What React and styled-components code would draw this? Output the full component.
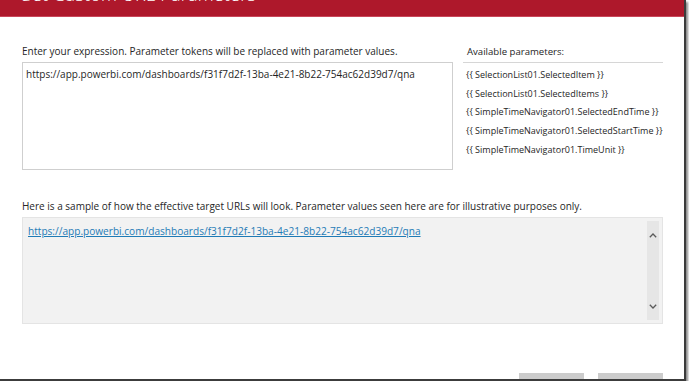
import React from 'react';
import styled, { createGlobalStyle } from 'styled-components';

const GlobalStyle = createGlobalStyle`
  html, body {
    margin: 0;
    padding: 0;
    background: #ffffff;
    overflow: hidden;
  }
  body {
    font-family: "Open Sans", "Noto Sans", sans-serif;
    color: #262626;
  }
`;

const Dialog = styled.div`
  width: 684px;
  height: 379px;
  background: #ffffff;
  border-right: 2px solid #3c3c3c;
  border-bottom: 2px solid #3c3c3c;
  box-shadow: 2px 2px 2px rgba(0, 0, 0, 0.45);
  display: flex;
  flex-direction: column;
  overflow: hidden;
`;

const Header = styled.header`
  height: 16px;
  flex: none;
  background: #ae182b;
  border-bottom: 1px solid #c9475a;
  padding-left: 22px;
  overflow: hidden;
`;

const Title = styled.h1`
  margin: -18px 0 0;
  font-size: 18px;
  font-weight: 300;
  line-height: 24px;
  letter-spacing: 0.2px;
  color: #ffffff;
  white-space: nowrap;
`;

const Body = styled.div`
  flex: 1;
  display: flex;
  flex-direction: column;
  padding: 27px 21px 0 22px;
`;

const TopRow = styled.div`
  display: flex;
  gap: 10px;
`;

const ExpressionColumn = styled.div`
  width: 431px;
  display: flex;
  flex-direction: column;
`;

const Label = styled.div`
  font-size: 10px;
  line-height: 14px;
  color: #262626;
  white-space: nowrap;
  margin-bottom: ${(p) => p.$gap || 4}px;
`;

const Expression = styled.div`
  height: 98px;
  border: 1px solid #cfcfcf;
  padding: 4px 3px;
  font-size: 10px;
  line-height: 14px;
  color: #1f1f1f;
`;

const ParamColumn = styled.div`
  width: 200px;
  display: flex;
  flex-direction: column;
`;

const ParamHeading = styled.div`
  font-size: 9.6px;
  line-height: 14px;
  padding: 0 0 3px 4px;
  border-bottom: 1px solid #d6d6d6;
  margin-top: 1px;
`;

const ParamList = styled.ul`
  list-style: none;
  margin: 0;
  padding: 5px 0 0 3px;
  display: flex;
  flex-direction: column;
  gap: 5.7px;
`;

const ParamItem = styled.li`
  font-size: 9px;
  line-height: 13px;
  color: #262626;
  white-space: nowrap;
`;

const SampleSection = styled.section`
  margin-top: 29px;
  display: flex;
  flex-direction: column;
`;

const SampleBox = styled.div`
  height: 99px;
  background: #f2f2f2;
  border: 1px solid #e4e4e4;
  display: flex;
  justify-content: space-between;
  padding: 3px 3px 3px 5px;
`;

const SampleLink = styled.a`
  font-size: 10.1px;
  line-height: 14px;
  color: #1f7bb6;
  text-decoration: underline;
  margin-top: 3px;
`;

const Scrollbar = styled.div`
  width: 12px;
  background: #e6e6e6;
  display: flex;
  flex-direction: column;
  justify-content: space-between;
  align-items: center;
  padding: 12px 0 11px;
`;

const Footer = styled.footer`
  margin-top: auto;
  display: flex;
  justify-content: flex-end;
  gap: 14px;
`;

const Button = styled.button`
  width: 65px;
  height: 6px;
  border: none;
  background: #cccccc;
  padding: 0;
`;

const Chevron = ({ up }) => (
  <svg width="8" height="5" viewBox="0 0 8 5">
    <path
      d={up ? 'M0.8 4.2 L4 1 L7.2 4.2' : 'M0.8 0.8 L4 4 L7.2 0.8'}
      fill="none"
      stroke="#5a5a5a"
      strokeWidth="1.3"
    />
  </svg>
);

const params = [
  '{{ SelectionList01.SelectedItem }}',
  '{{ SelectionList01.SelectedItems }}',
  '{{ SimpleTimeNavigator01.SelectedEndTime }}',
  '{{ SimpleTimeNavigator01.SelectedStartTime }}',
  '{{ SimpleTimeNavigator01.TimeUnit }}',
];

const url = 'https://app.powerbi.com/dashboards/f31f7d2f-13ba-4e21-8b22-754ac62d39d7/qna';

export default function App() {
  return (
    <>
      <GlobalStyle />
      <Dialog>
        <Header>
          <Title>Set Custom URL Parameters</Title>
        </Header>
        <Body>
          <TopRow>
            <ExpressionColumn>
              <Label>Enter your expression. Parameter tokens will be replaced with parameter values.</Label>
              <Expression>{url}</Expression>
            </ExpressionColumn>
            <ParamColumn>
              <ParamHeading>Available parameters:</ParamHeading>
              <ParamList>
                {params.map((p) => (
                  <ParamItem key={p}>{p}</ParamItem>
                ))}
              </ParamList>
            </ParamColumn>
          </TopRow>
          <SampleSection>
            <Label $gap={4}>
              Here is a sample of how the effective target URLs will look. Parameter values seen here are for illustrative purposes only.
            </Label>
            <SampleBox>
              <SampleLink href="#">{url}</SampleLink>
              <Scrollbar>
                <Chevron up />
                <Chevron />
              </Scrollbar>
            </SampleBox>
          </SampleSection>
          <Footer>
            <Button aria-label="OK" />
            <Button aria-label="Cancel" />
          </Footer>
        </Body>
      </Dialog>
    </>
  );
}
